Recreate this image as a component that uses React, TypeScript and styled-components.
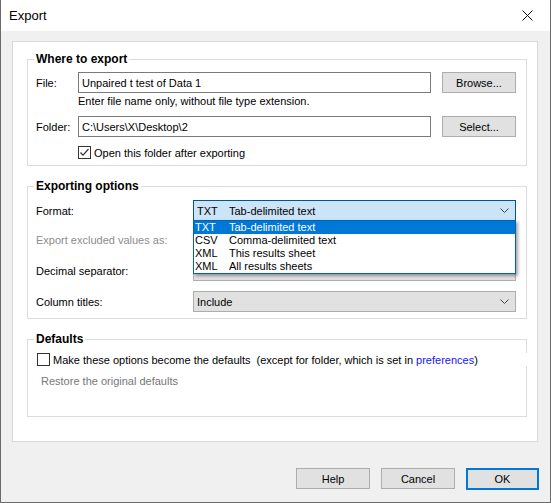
import React from 'react';
import styled, { createGlobalStyle } from 'styled-components';

const GlobalStyle = createGlobalStyle`
  html, body {
    margin: 0;
    padding: 0;
    background: #f0f0f0;
  }
  body {
    font-family: "Liberation Sans", Arial, sans-serif;
    font-size: 11px;
    color: #000;
  }
`;

const formats = [
  { code: 'TXT', label: 'Tab-delimited text' },
  { code: 'CSV', label: 'Comma-delimited text' },
  { code: 'XML', label: 'This results sheet' },
  { code: 'XML', label: 'All results sheets' },
];

const Window = styled.div`
  width: 551px;
  height: 503px;
  box-sizing: border-box;
  border: 1px solid #6b6b6b;
  border-top: none;
  background: #f0f0f0;
  display: flex;
  flex-direction: column;
`;

const TitleBar = styled.div`
  height: 31px;
  flex: none;
  background: #fff;
  display: flex;
  align-items: center;
  justify-content: space-between;
  padding-left: 8px;
  font-size: 13px;
`;

const CloseButton = styled.div`
  width: 28px;
  height: 31px;
  display: flex;
  align-items: center;
  justify-content: flex-start;
  padding-left: 1px;
`;

const Body = styled.div`
  flex: 1;
  display: flex;
  flex-direction: column;
  padding: 10px 11px 0 11px;
`;

const Panel = styled.div`
  width: 526px;
  box-sizing: border-box;
  background: #fff;
  border: 1px solid #d9d9d9;
  padding: 9px 10px 24px 14px;
  display: flex;
  flex-direction: column;
  gap: 12px;
`;

const Group = styled.fieldset<{ $bottom: number }>`
  margin: 0;
  min-width: 0;
  padding: 0 10px ${p => p.$bottom}px 8px;
  border: 1px solid #dcdcdc;
  display: flex;
  flex-direction: column;
`;

const Legend = styled.legend`
  padding: 0 2px;
  margin-left: -2px;
  font-weight: bold;
  font-size: 12px;
  line-height: 16px;
`;

const FileRow = styled.div<{ $top: number }>`
  display: flex;
  align-items: center;
  height: 21px;
  margin-top: ${p => p.$top}px;
`;

const RowLabel = styled.span`
  width: 42px;
  flex: none;
`;

const TextInput = styled.div`
  width: 353px;
  height: 21px;
  box-sizing: border-box;
  border: 1px solid #7a7a7a;
  padding-left: 3px;
  display: flex;
  align-items: center;
  white-space: nowrap;
`;

const Button = styled.div<{ $default?: boolean }>`
  width: ${p => (p.$default ? 73 : 74)}px;
  height: ${p => (p.$default ? 22 : 21)}px;
  box-sizing: border-box;
  margin-left: 11px;
  background: #e1e1e1;
  border: ${p => (p.$default ? '2px solid #0078d7' : '1px solid #adadad')};
  display: flex;
  align-items: center;
  justify-content: center;
`;

const Hint = styled.div`
  margin: 1px 0 0 42px;
  line-height: 15px;
`;

const CheckRow = styled.label<{ $indent: number; $top: number; $cover?: boolean }>`
  display: flex;
  align-items: center;
  height: 13px;
  margin-top: ${p => p.$top}px;
  margin-left: ${p => p.$indent}px;
  margin-right: ${p => (p.$cover ? -12 : 0)}px;
  background: #fff;
  white-space: nowrap;
`;

const Box = styled.span`
  width: 13px;
  height: 13px;
  box-sizing: border-box;
  border: 1px solid #333;
  background: #fff;
  flex: none;
  margin-right: 3px;
  display: flex;
`;

const Aside = styled.span`
  margin-left: 6px;
`;

const Link = styled.span`
  color: #1414ff;
`;

const OptionRow = styled.div<{ $top: number }>`
  display: grid;
  grid-template-columns: 157px 323px;
  align-items: center;
  margin-top: ${p => p.$top}px;
`;

const OptionLabel = styled.span<{ $disabled?: boolean }>`
  color: ${p => (p.$disabled ? '#8d8d8d' : '#000')};
`;

const ComboWrap = styled.div`
  position: relative;
`;

const Combo = styled.div<{ $state: 'focused' | 'normal' | 'disabled' }>`
  height: 21px;
  box-sizing: border-box;
  padding: 0 6px 0 3px;
  display: flex;
  align-items: center;
  white-space: nowrap;
  background: ${p => (p.$state === 'focused' ? '#cce4f7' : p.$state === 'disabled' ? '#f0f0f0' : '#e1e1e1')};
  border: 1px solid ${p => (p.$state === 'focused' ? '#005499' : p.$state === 'disabled' ? '#cccccc' : '#adadad')};
  color: ${p => (p.$state === 'disabled' ? '#8d8d8d' : '#000')};
`;

const ComboText = styled.span`
  flex: 1;
  display: flex;
`;

const Code = styled.span<{ $width: number }>`
  width: ${p => p.$width}px;
  flex: none;
`;

const DropList = styled.div`
  position: absolute;
  top: calc(100% - 1px);
  left: 0;
  right: 0;
  background: #fff;
  border: 1px solid #0063b1;
  box-shadow: 2px 2px 3px rgba(0, 0, 0, 0.35);
  z-index: 2;
`;

const DropItem = styled.div<{ $selected?: boolean }>`
  height: 13px;
  line-height: 13px;
  padding-left: 1px;
  display: flex;
  white-space: nowrap;
  background: ${p => (p.$selected ? '#0078d7' : 'transparent')};
  color: ${p => (p.$selected ? '#fff' : '#000')};
`;

const Restore = styled.div`
  margin: 8px 0 0 5px;
  line-height: 14px;
  color: #777;
`;

const Footer = styled.div`
  display: flex;
  justify-content: flex-end;
  margin-top: 26px;
`;

const Chevron = () => (
  <svg width="9" height="5" viewBox="0 0 9 5">
    <polyline points="0.5,0.5 4.5,4.5 8.5,0.5" fill="none" stroke="#444" strokeWidth="1" />
  </svg>
);

const Check = () => (
  <svg width="11" height="11" viewBox="0 0 11 11">
    <polyline points="1.5,5.5 4,8.2 9.5,2" fill="none" stroke="#333" strokeWidth="1.2" />
  </svg>
);

export default function App() {
  return (
    <>
      <GlobalStyle />
      <Window>
        <TitleBar>
          <span>Export</span>
          <CloseButton>
            <svg width="11" height="11" viewBox="0 0 11 11">
              <path d="M0.5 0.5 L10.5 10.5 M10.5 0.5 L0.5 10.5" stroke="#111" strokeWidth="1" />
            </svg>
          </CloseButton>
        </TitleBar>
        <Body>
          <Panel>
            <Group $bottom={6}>
              <Legend>Where to export</Legend>
              <FileRow $top={5}>
                <RowLabel>File:</RowLabel>
                <TextInput>Unpaired t test of Data 1</TextInput>
                <Button>Browse...</Button>
              </FileRow>
              <Hint>Enter file name only, without file type extension.</Hint>
              <FileRow $top={7}>
                <RowLabel>Folder:</RowLabel>
                <TextInput>C:\Users\X\Desktop\2</TextInput>
                <Button>Select...</Button>
              </FileRow>
              <CheckRow $indent={42} $top={9}>
                <Box><Check /></Box>
                Open this folder after exporting
              </CheckRow>
            </Group>

            <Group $bottom={6}>
              <Legend>Exporting options</Legend>
              <OptionRow $top={6}>
                <OptionLabel>Format:</OptionLabel>
                <ComboWrap>
                  <Combo $state="focused">
                    <ComboText>
                      <Code $width={32}>TXT</Code>
                      Tab-delimited text
                    </ComboText>
                    <Chevron />
                  </Combo>
                  <DropList>
                    {formats.map((f, i) => (
                      <DropItem key={i} $selected={i === 0}>
                        <Code $width={34}>{f.code}</Code>
                        {f.label}
                      </DropItem>
                    ))}
                  </DropList>
                </ComboWrap>
              </OptionRow>
              <OptionRow $top={8}>
                <OptionLabel $disabled>Export excluded values as:</OptionLabel>
                <Combo $state="disabled">
                  <ComboText />
                  <Chevron />
                </Combo>
              </OptionRow>
              <OptionRow $top={10}>
                <OptionLabel>Decimal separator:</OptionLabel>
                <Combo $state="normal">
                  <ComboText />
                  <Chevron />
                </Combo>
              </OptionRow>
              <OptionRow $top={10}>
                <OptionLabel>Column titles:</OptionLabel>
                <Combo $state="normal">
                  <ComboText>Include</ComboText>
                  <Chevron />
                </Combo>
              </OptionRow>
            </Group>

            <Group $bottom={28}>
              <Legend>Defaults</Legend>
              <CheckRow $indent={1} $top={6} $cover>
                <Box />
                Make these options become the defaults
                <Aside>
                  (except for folder, which is set in <Link>preferences</Link>)
                </Aside>
              </CheckRow>
              <Restore>Restore the original defaults</Restore>
            </Group>
          </Panel>
          <Footer>
            <Button>Help</Button>
            <Button>Cancel</Button>
            <Button $default>OK</Button>
          </Footer>
        </Body>
      </Window>
    </>
  );
}
